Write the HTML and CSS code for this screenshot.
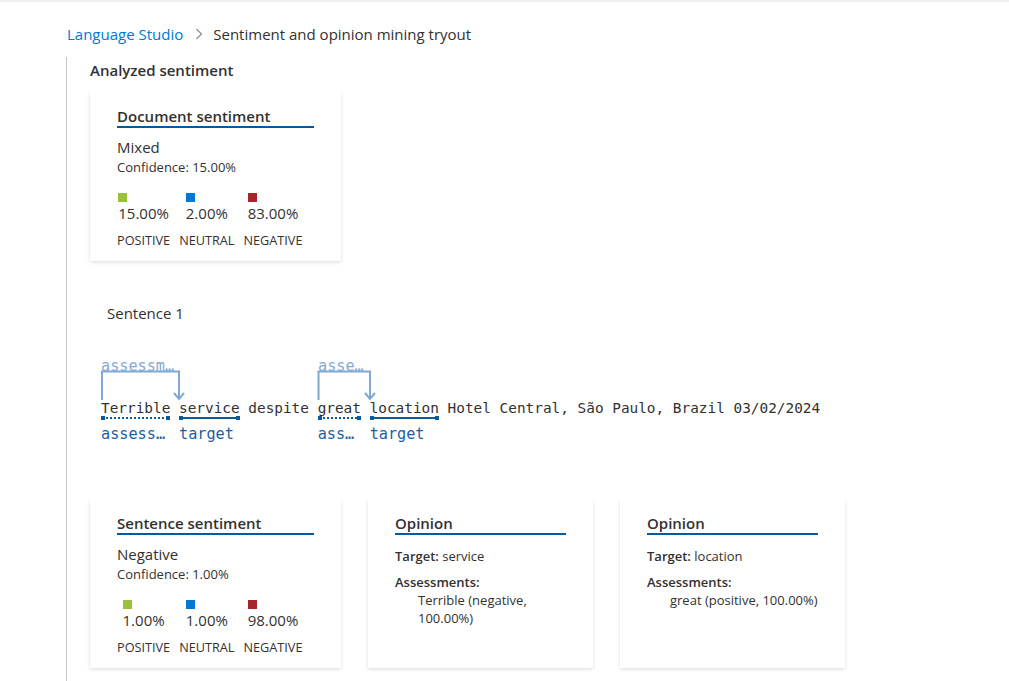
FILE: index.html
```html
<!DOCTYPE html>
<html lang="en">
<head>
<meta charset="utf-8">
<title>Sentiment and opinion mining tryout</title>
<link rel="stylesheet" href="styles.css">
</head>
<body>
<nav class="crumbs">
  <a class="crumb-link" href="#">Language Studio</a>
  <svg class="chev" width="10" height="12" viewBox="0 0 10 12"><path d="M2.5 1 L7.5 6 L2.5 11" fill="none" stroke="#8a8886" stroke-width="1.1"/></svg>
  <span class="crumb-current">Sentiment and opinion mining tryout</span>
</nav>
<main class="main">
  <h2 class="section-title">Analyzed sentiment</h2>

  <section class="card card-doc">
    <h3 class="card-title">Document sentiment</h3>
    <div class="sent-label">Mixed</div>
    <div class="conf">Confidence: 15.00%</div>
    <div class="legend">
      <div class="col"><div class="inner"><span class="sq sq-pos"></span><div class="pct">15.00%</div></div><div class="cap">POSITIVE</div></div>
      <div class="col"><div class="inner"><span class="sq sq-neu"></span><div class="pct">2.00%</div></div><div class="cap">NEUTRAL</div></div>
      <div class="col"><div class="inner"><span class="sq sq-neg"></span><div class="pct">83.00%</div></div><div class="cap">NEGATIVE</div></div>
    </div>
  </section>

  <div class="sentence-title">Sentence 1</div>

  <div class="annot">
    <svg class="arcs" width="300" height="44" viewBox="0 0 300 44">
      <g fill="none" stroke="#7fa8d4" stroke-width="2">
        <path d="M1 43 V14.5 H78 V42"/>
        <path d="M73 36 L78 42 L83 36"/>
        <path d="M217.5 43 V14.5 H269 V42"/>
        <path d="M264 36 L269 42 L274 36"/>
      </g>
    </svg>
    <div class="top-lbl top-lbl-1">assessment</div>
    <div class="top-lbl top-lbl-2">assessment</div>
    <div class="sent-row">
      <div class="tok"><span class="w">Terrible</span><span class="ul ul-dot"></span><span class="lbl">assessment</span></div>
      <span class="w sp"> </span>
      <div class="tok"><span class="w">service</span><span class="ul ul-solid"></span><span class="lbl">target</span></div>
      <span class="w sp"> despite </span>
      <div class="tok"><span class="w">great</span><span class="ul ul-dot"></span><span class="lbl">assessment</span></div>
      <span class="w sp"> </span>
      <div class="tok"><span class="w">location</span><span class="ul ul-solid"></span><span class="lbl">target</span></div>
      <span class="w sp"> Hotel Central, São Paulo, Brazil 03/02/2024</span>
    </div>
  </div>

  <div class="card-row">
    <section class="card card-doc">
      <h3 class="card-title">Sentence sentiment</h3>
      <div class="sent-label">Negative</div>
      <div class="conf">Confidence: 1.00%</div>
      <div class="legend">
        <div class="col"><div class="inner"><span class="sq sq-pos"></span><div class="pct">1.00%</div></div><div class="cap">POSITIVE</div></div>
        <div class="col"><div class="inner"><span class="sq sq-neu"></span><div class="pct">1.00%</div></div><div class="cap">NEUTRAL</div></div>
        <div class="col"><div class="inner"><span class="sq sq-neg"></span><div class="pct">98.00%</div></div><div class="cap">NEGATIVE</div></div>
      </div>
    </section>
    <section class="card card-op">
      <h3 class="card-title">Opinion</h3>
      <div class="op-line"><b>Target:</b> service</div>
      <div class="op-head"><b>Assessments:</b></div>
      <div class="op-item">Terrible (negative, 100.00%)</div>
    </section>
    <section class="card card-op">
      <h3 class="card-title">Opinion</h3>
      <div class="op-line"><b>Target:</b> location</div>
      <div class="op-head"><b>Assessments:</b></div>
      <div class="op-item">great (positive, 100.00%)</div>
    </section>
  </div>
</main>
</body>
</html>
```
FILE: styles.css
```css
* { box-sizing: border-box; }
html, body { margin: 0; padding: 0; background: #fff; }
body {
  font-family: "Open Sans", "Noto Sans", sans-serif;
  color: #323130;
  border-top: 2px solid #f0f0f0;
  height: 681px;
  overflow: hidden;
}
.crumbs {
  display: flex;
  align-items: flex-start;
  height: 55px;
  padding: 22px 0 0 67px;
  font-size: 15px;
  line-height: 20px;
}
.crumb-link { color: #0078d4; text-decoration: none; }
.chev { margin: 4px 9px 0 11px; }
.crumb-current { color: #323130; }

.main {
  margin-left: 66px;
  border-left: 1px solid #c8c6c4;
  padding-left: 23px;
  height: 624px;
}
.section-title {
  margin: 0;
  padding-top: 3px;
  font-size: 15px;
  line-height: 20px;
  font-weight: 600;
}
.card {
  background: #fff;
  box-shadow: 0 1.6px 3.6px 0 rgba(0,0,0,.132), 0 0.3px 0.9px 0 rgba(0,0,0,.108);
  padding: 15px 27px 12px;
}
.card-doc { width: 251px; margin-top: 11px; }
.card-title {
  margin: 0;
  font-size: 15px;
  line-height: 20px;
  font-weight: 600;
  border-bottom: 2px solid #005a9e;
}
.sent-label { margin-top: 9px; font-size: 15px; line-height: 20px; }
.conf { font-size: 13px; line-height: 18px; margin-top: 1px; }
.legend { display: flex; gap: 9px; margin-top: 17px; }
.col { text-align: center; }
.inner { display: inline-block; text-align: left; }
.sq { display: block; width: 9px; height: 9px; }
.sq-pos { background: #9bc13c; }
.sq-neu { background: #0078d4; }
.sq-neg { background: #a4262c; }
.pct { font-size: 15px; line-height: 20px; margin-top: 1px; }
.cap { font-size: 12.7px; line-height: 18px; margin-top: 7px; }

.sentence-title {
  margin: 42px 0 0 17px;
  font-size: 15px;
  line-height: 20px;
}
.annot {
  position: relative;
  margin: 34px 0 0 11px;
  padding-top: 42px;
}
.arcs { position: absolute; left: 0; top: 0; overflow: visible; }
.top-lbl {
  position: absolute;
  top: 0;
  font-family: "DejaVu Sans Mono", "Liberation Mono", monospace;
  font-size: 15.2px;
  line-height: 18px;
  color: #82aad6;
  white-space: nowrap;
  overflow: hidden;
  text-overflow: ellipsis;
}
.top-lbl-1 { left: 0; width: 78px; }
.top-lbl-2 { left: 217px; width: 52px; }
.sent-row {
  display: flex;
  align-items: flex-start;
  font-family: "DejaVu Sans Mono", "Liberation Mono", monospace;
}
.w {
  font-size: 14.4px;
  line-height: 18px;
  color: #323130;
  white-space: pre;
}
.tok { display: flex; flex-direction: column; }
.ul { position: relative; height: 2px; margin: 0 1px; }
.ul::before, .ul::after {
  content: "";
  position: absolute;
  top: -1px;
  width: 4px;
  height: 4px;
  background: #0b5a9c;
}
.ul::before { left: -1px; }
.ul::after { right: -1px; }
.ul-solid { background: #0b5a9c; }
.ul-dot { background: repeating-linear-gradient(to right, #0b5a9c 0 2px, transparent 2px 4px); }
.lbl {
  contain: inline-size;
  margin-top: 6px;
  font-size: 15.2px;
  line-height: 18px;
  color: #1a5fa3;
  white-space: nowrap;
  overflow: hidden;
  text-overflow: ellipsis;
}

.card-row { display: flex; gap: 27px; margin-top: 56px; align-items: stretch; }
.card-row .card-doc { margin-top: 0; padding-top: 14px; }
.card-op { width: 225px; padding-top: 14px; }
.op-line { margin-top: 12px; font-size: 13px; line-height: 18px; }
.op-head { margin-top: 8px; font-size: 13px; line-height: 18px; }
.op-line b, .op-head b { font-weight: 600; }
.op-item { padding-left: 23px; font-size: 13px; line-height: 18px; }
```
